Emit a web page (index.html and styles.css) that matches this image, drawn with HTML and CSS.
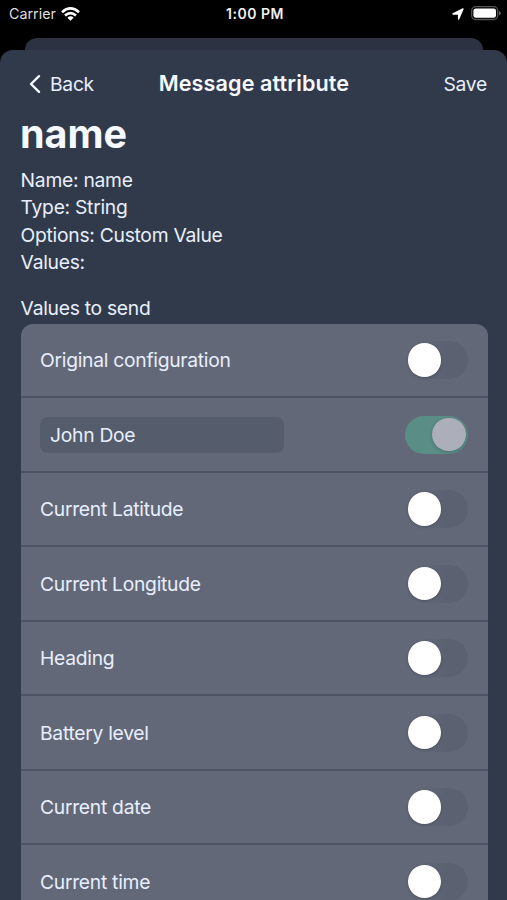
FILE: index.html
```html
<!DOCTYPE html>
<html lang="en">
<head>
<meta charset="utf-8">
<title>Message attribute</title>
<link rel="stylesheet" href="styles.css">
</head>
<body>
<div class="status">
  <div class="status-left"><span class="carrier">Carrier</span>
    <svg class="wifi" width="19" height="14" viewBox="0 0 19 14" fill="none" stroke="#fff" stroke-width="2.6"><path d="M1 5.2Q9.5-2.4 18 5.2"/><path d="M4 8.5Q9.5 3.6 15 8.5"/><path d="M9.5 13.8L6.4 10.7Q9.5 8 12.6 10.7Z" fill="#fff" stroke="none"/></svg>
  </div>
  <span class="clock">1:00 PM</span>
  <div class="status-right">
    <svg width="12" height="12" viewBox="0 0 12 12"><path d="M11 1L6.6 11V6H1Z" fill="#fff" stroke="#fff" stroke-width="1.4" stroke-linejoin="round"/></svg>
    <svg class="battery" width="30" height="15" viewBox="0 0 30 15"><rect x=".7" y=".7" width="26" height="12.8" rx="4" fill="none" stroke="#555" stroke-width="1.3"/><rect x="2.4" y="2.4" width="22.6" height="9.4" rx="2.4" fill="#fff"/><path d="M28 5Q29.7 5.6 29.7 7.2T28 9.5Z" fill="#666"/></svg>
  </div>
</div>
<div class="back-sheet"></div>
<main class="sheet">
  <header class="nav">
    <div class="nav-back"><svg width="12" height="20" viewBox="0 0 12 20" fill="none" stroke="#f4f8ff" stroke-width="2.4" stroke-linecap="round" stroke-linejoin="round"><path d="M10 2.2L2 10l8 7.8"/></svg><span class="back-label">Back</span></div>
    <span class="nav-title">Message attribute</span>
    <span class="nav-save">Save</span>
  </header>
  <h1><span>name</span></h1>
  <div class="details">
    <div><span>Name: name</span></div>
    <div><span>Type: String</span></div>
    <div><span>Options: Custom Value</span></div>
    <div><span>Values:</span></div>
  </div>
  <h2><span>Values to send</span></h2>
  <div class="list">
    <div class="row"><span>Original configuration</span><i class="switch"></i></div>
    <div class="row"><div class="field"><span>John Doe</span></div><i class="switch on"></i></div>
    <div class="row"><span>Current Latitude</span><i class="switch"></i></div>
    <div class="row"><span>Current Longitude</span><i class="switch"></i></div>
    <div class="row"><span>Heading</span><i class="switch"></i></div>
    <div class="row"><span>Battery level</span><i class="switch"></i></div>
    <div class="row"><span>Current date</span><i class="switch"></i></div>
    <div class="row"><span>Current time</span><i class="switch"></i></div>
  </div>
</main>
</body>
</html>
```
FILE: styles.css
```css
* { box-sizing: border-box; }
html, body { margin: 0; height: 900px; overflow: hidden; background: #000; }
body { font-family: Inter, "Liberation Sans", sans-serif; font-size: 19.3px; letter-spacing: -.28px; color: #e8effc; display: flex; flex-direction: column; }
svg { display: block; flex: none; }
.status { height: 37.5px; flex: none; padding: 0 6px 0 9px; display: grid; grid-template-columns: 1fr auto 1fr; align-items: start; color: #f0f0f0; font-size: 14.3px; line-height: 28px; letter-spacing: 0; }
.status-left, .status-right { display: flex; align-items: center; height: 27px; }
.status-left { gap: 5.5px; }
.carrier { color: #ddd; }
.clock { font-weight: 600; font-size: 14px; letter-spacing: .5px; }
.status-right { justify-content: flex-end; gap: 7px; }
.back-sheet { flex: none; height: 12.5px; margin: 0 24px 0 25px; background: #2d3242; border-radius: 12px 12px 0 0; }
.sheet { flex: 1; min-height: 0; overflow: hidden; background: #313a4b; border-radius: 13px 13px 0 0; padding: 0 20px; }
.nav { display: grid; grid-template-columns: 1fr auto 1fr; align-items: center; height: 66px; }
.nav-back { display: flex; align-items: center; gap: 9px; padding: 1px 0 0 9px; }
.nav-title { font-size: 21.6px; font-weight: 600; letter-spacing: .1px; color: #f6f9ff; padding-left: 1px; }
.nav-save { text-align: right; padding-top: 1px; }
h1 { margin: 0; height: 51px; line-height: 37px; font-size: 39.5px; font-weight: 700; letter-spacing: 0; color: #f6f9ff; }
.details { line-height: 27.25px; padding-left: .6px; }
h2 { margin: 17px 0 0; padding-left: .6px; height: 30.7px; line-height: 31.5px; font-size: inherit; font-weight: 400; }
.list { background: #636879; border-radius: 12px 12px 0 0; margin: 0 -.5px 0 .5px; }
.row { display: flex; align-items: center; justify-content: space-between; height: 74.5px; border-bottom: 2px solid #4a5264; padding: .6px 19.5px 0; }
.field { width: 244px; height: 36px; border-radius: 8px; background: #555d6d; padding: 0 10px; line-height: 36px; }
.switch { width: 63px; height: 38px; border-radius: 19px; display: flex; align-items: center; padding: 0 2.5px; background: linear-gradient(90deg, #636879 25%, #5b6170 65%); }
.switch::after { content: ""; width: 33.5px; height: 33.5px; border-radius: 50%; background: #fff; box-shadow: 0 1px 3px rgba(30, 35, 50, .3); }
.switch.on { background: #5a8d86; justify-content: flex-end; }
.switch.on::after { background: #acaeb9; }
```
